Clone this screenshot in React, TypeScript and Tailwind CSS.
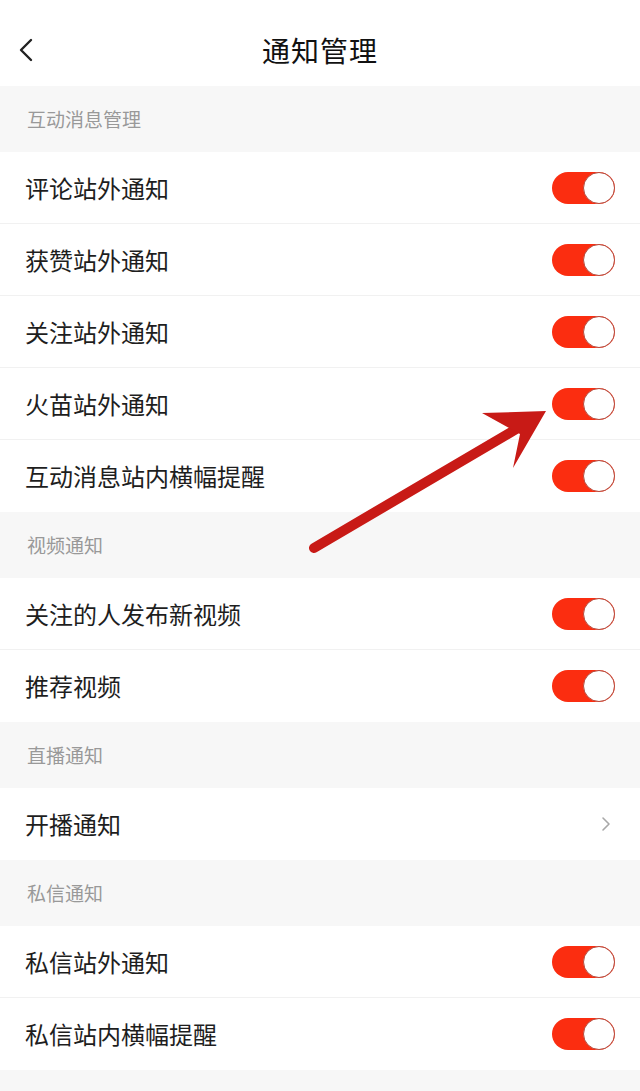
import React from "react";

const font = { fontFamily: '"Noto Sans CJK SC", "Noto Sans", sans-serif' };

type Row = { label: string; kind: "toggle" | "link" };
type Group = { title: string; rows: Row[] };

const groups: Group[] = [
  {
    title: "互动消息管理",
    rows: [
      { label: "评论站外通知", kind: "toggle" },
      { label: "获赞站外通知", kind: "toggle" },
      { label: "关注站外通知", kind: "toggle" },
      { label: "火苗站外通知", kind: "toggle" },
      { label: "互动消息站内横幅提醒", kind: "toggle" },
    ],
  },
  {
    title: "视频通知",
    rows: [
      { label: "关注的人发布新视频", kind: "toggle" },
      { label: "推荐视频", kind: "toggle" },
    ],
  },
  {
    title: "直播通知",
    rows: [{ label: "开播通知", kind: "link" }],
  },
  {
    title: "私信通知",
    rows: [
      { label: "私信站外通知", kind: "toggle" },
      { label: "私信站内横幅提醒", kind: "toggle" },
    ],
  },
];

const Toggle = () => (
  <div className="flex h-[32px] w-[63px] items-center justify-end rounded-full bg-[#fb2d10]">
    <div className="h-[32px] w-[32px] rounded-full border border-[#b54a3c] bg-white" />
  </div>
);

const Chevron = () => (
  <svg width="10" height="16" viewBox="0 0 10 16" fill="none">
    <path d="M2 2l6 6-6 6" stroke="#a8a8a8" strokeWidth="1.6" strokeLinecap="round" strokeLinejoin="round" />
  </svg>
);

export default function App() {
  return (
    <div className="relative min-h-[1091px] w-full bg-[#f7f7f7]" style={font}>
      {/* header */}
      <div className="relative flex h-[86px] items-center justify-center bg-white pt-[14px]">
        <svg className="absolute left-[18px] top-[38px]" width="16" height="24" viewBox="0 0 16 24" fill="none">
          <path d="M13 2L3 12l10 10" stroke="#222" strokeWidth="2.4" strokeLinecap="round" strokeLinejoin="round" />
        </svg>
        <span className="text-[28px] leading-none text-[#111] tracking-[1px]">通知管理</span>
      </div>

      {groups.map((g) => (
        <div key={g.title}>
          <div className="flex h-[66px] items-center pl-[27px] text-[19px] text-[#999]">{g.title}</div>
          <div className="bg-white">
            {g.rows.map((r, i) => (
              <div
                key={r.label}
                className={
                  i < g.rows.length - 1
                    ? "flex h-[72px] items-center justify-between border-b border-[#f1f1f1] pl-[25px] pr-[25px]"
                    : "flex h-[72px] items-center justify-between pl-[25px] pr-[25px]"
                }
              >
                <span className="text-[24px] text-[#1e1e1e]">{r.label}</span>
                {r.kind === "toggle" ? <Toggle /> : <div className="pr-[4px]"><Chevron /></div>}
              </div>
            ))}
          </div>
        </div>
      ))}

      {/* annotation arrow */}
      <svg className="pointer-events-none absolute left-0 top-0" width="640" height="1091" viewBox="0 0 640 1091">
        <line x1="314" y1="548" x2="518" y2="428" stroke="#c81a16" strokeWidth="10" strokeLinecap="round" />
        <path d="M546 411 L482 413 L520 434 L513 468 Z" fill="#c81a16" />
      </svg>
    </div>
  );
}
